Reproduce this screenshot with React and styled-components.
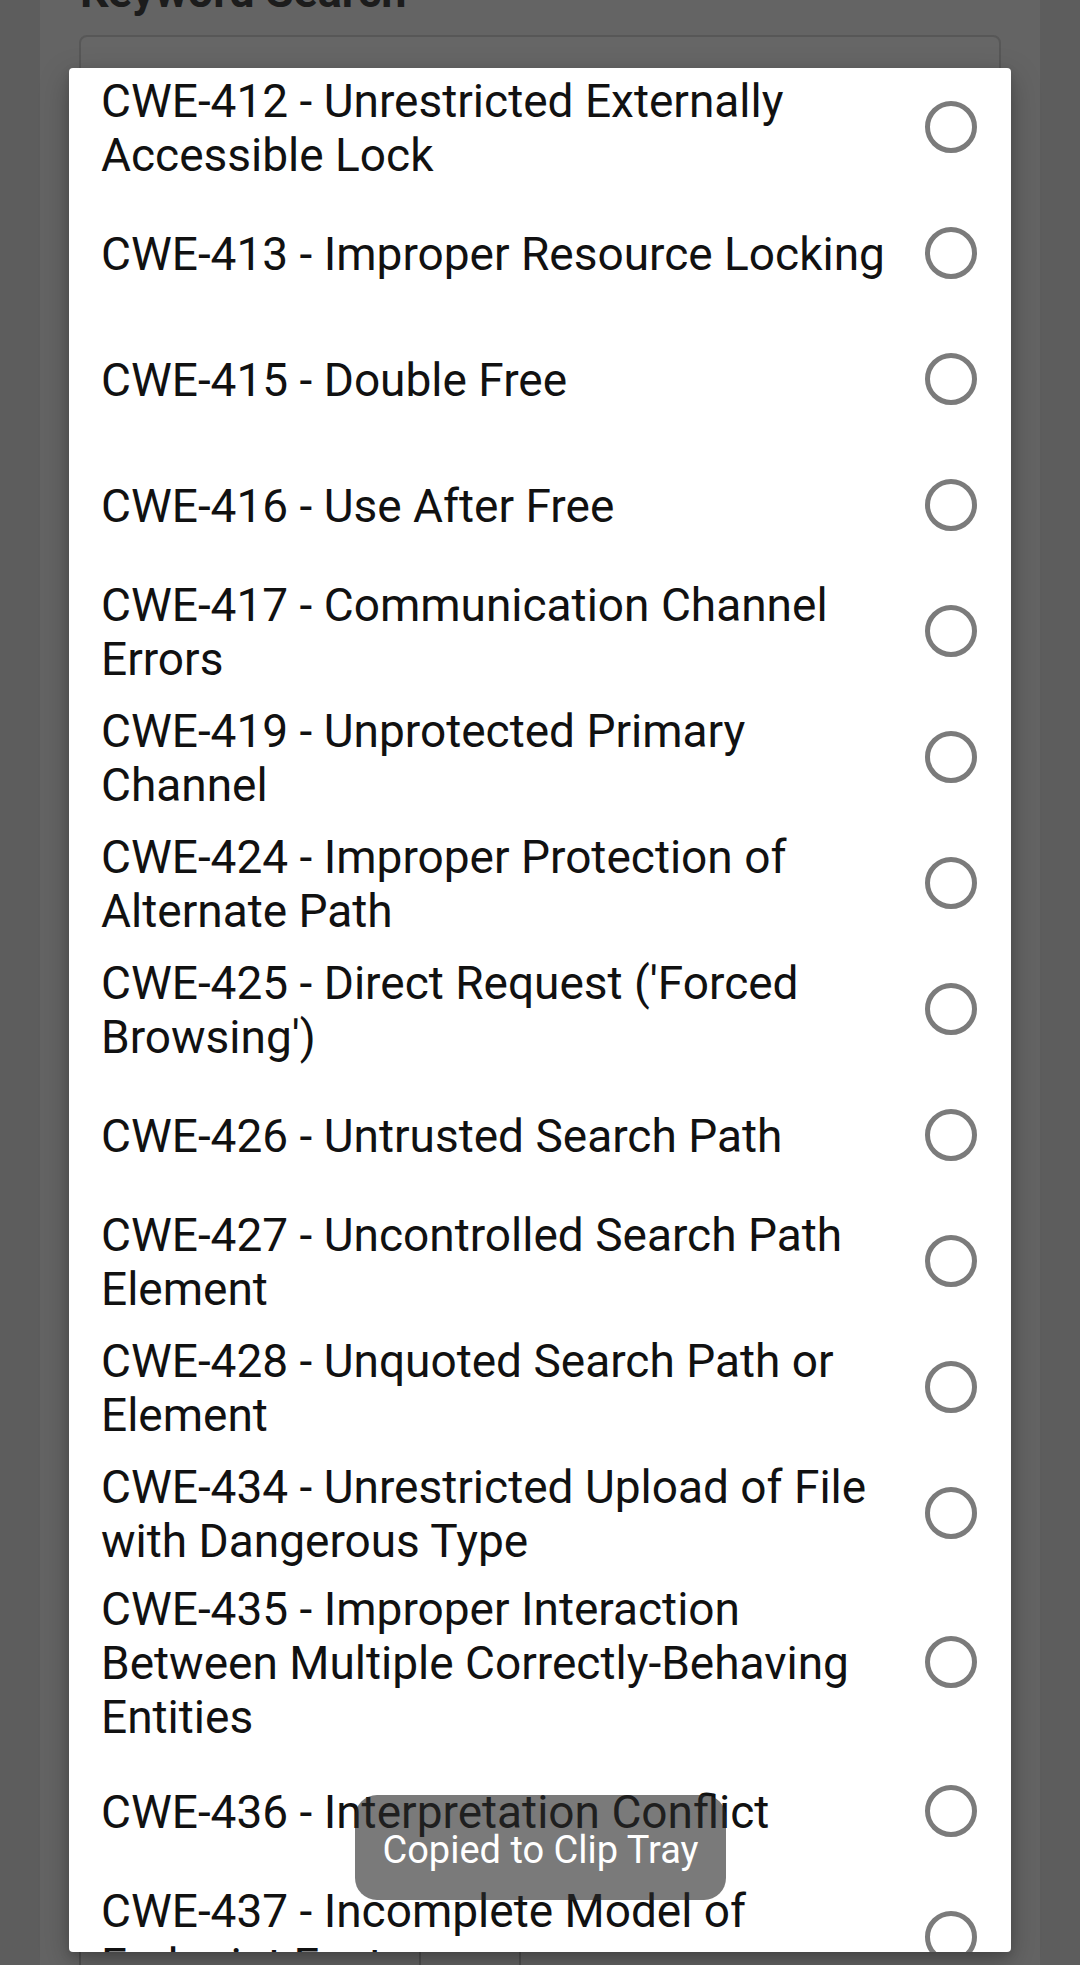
import React from "react";
import styled, { createGlobalStyle } from "styled-components";

const GlobalStyle = createGlobalStyle`
  html, body {
    margin: 0;
    padding: 0;
    background: #5d5d5d;
    overflow: hidden;
  }
  body {
    font-family: Roboto, "Noto Sans", "Liberation Sans", sans-serif;
  }
  * { box-sizing: border-box; }
`;

const Page = styled.div`
  position: relative;
  width: 1080px;
  height: 1965px;
  overflow: hidden;
  background: #5d5d5d;
  display: flex;
  justify-content: center;
`;

const BackCard = styled.div`
  width: 1000px;
  height: 100%;
  background: #646464;
  display: flex;
  flex-direction: column;
  padding: 0 39px;
`;

const Heading = styled.h2`
  margin: -34px 0 0 1px;
  font-size: 45px;
  line-height: 52px;
  font-weight: 700;
  color: #1c1c1c;
  white-space: nowrap;
`;

const SearchField = styled.div`
  margin-top: 17px;
  height: 120px;
  border: 2px solid #575757;
  border-radius: 8px;
  background: #666666;
`;

const Spacer = styled.div`
  flex: 1;
`;

const BottomBar = styled.div`
  height: 62px;
  display: flex;
  align-items: flex-start;
`;

const BarCell = styled.div`
  width: ${(p) => p.$w}px;
  height: 100%;
  border-left: ${(p) => (p.$left ? "2px solid #505050" : "none")};
  border-right: 2px solid #505050;
  display: flex;
  align-items: flex-start;
  justify-content: ${(p) => (p.$center ? "center" : "flex-start")};
  padding-left: ${(p) => (p.$center ? 0 : 28)}px;
  color: #2a2a2a;
  font-size: 30px;
  font-style: italic;
`;

const Dialog = styled.div`
  position: absolute;
  left: 69px;
  top: 68px;
  width: 942px;
  height: 1884px;
  background: #ffffff;
  border-radius: 4px;
  box-shadow: 0 10px 30px rgba(0, 0, 0, 0.25), 0 4px 10px rgba(0, 0, 0, 0.15);
  overflow: hidden;
`;

const List = styled.ul`
  list-style: none;
  margin: -4.5px 0 0 0;
  padding: 0;
`;

const Row = styled.li`
  min-height: 126px;
  display: flex;
  align-items: center;
  padding: 4px 34px 4px 32px;
`;

const RowText = styled.span`
  flex: 1;
  font-size: 46px;
  line-height: 54px;
  color: #111111;
  padding-top: 2px;
`;

const Radio = styled.span`
  flex-shrink: 0;
  width: 52px;
  height: 52px;
  margin-left: 20px;
  border: 5px solid #7b7b7b;
  border-radius: 50%;
`;

const Toast = styled.div`
  position: absolute;
  left: 355px;
  top: 1795px;
  width: 371px;
  height: 105px;
  border-radius: 22px;
  background: rgba(40, 40, 40, 0.62);
  color: #ffffff;
  font-size: 38px;
  display: flex;
  align-items: center;
  justify-content: center;
  padding-top: 4px;
`;

const items = [
  "CWE-412 - Unrestricted Externally Accessible Lock",
  "CWE-413 - Improper Resource Locking",
  "CWE-415 - Double Free",
  "CWE-416 - Use After Free",
  "CWE-417 - Communication Channel Errors",
  "CWE-419 - Unprotected Primary Channel",
  "CWE-424 - Improper Protection of Alternate Path",
  "CWE-425 - Direct Request ('Forced Browsing')",
  "CWE-426 - Untrusted Search Path",
  "CWE-427 - Uncontrolled Search Path Element",
  "CWE-428 - Unquoted Search Path or Element",
  "CWE-434 - Unrestricted Upload of File with Dangerous Type",
  "CWE-435 - Improper Interaction Between Multiple Correctly-Behaving Entities",
  "CWE-436 - Interpretation Conflict",
  "CWE-437 - Incomplete Model of Endpoint Features",
];

const PrinterIcon = () => (
  <svg width="46" height="40" viewBox="0 0 46 40">
    <rect x="10" y="0" width="26" height="12" fill="#1e1e1e" />
    <rect x="2" y="10" width="42" height="22" rx="3" fill="#1e1e1e" />
    <rect x="14" y="4" width="3" height="8" fill="#555" />
    <rect x="29" y="4" width="3" height="8" fill="#555" />
  </svg>
);

export default function App() {
  return (
    <>
      <GlobalStyle />
      <Page>
        <BackCard>
          <Heading>Keyword Search</Heading>
          <SearchField />
          <Spacer />
          <BottomBar>
            <BarCell $w={342} $left>/ /</BarCell>
            <BarCell $w={100} $center>
              <PrinterIcon />
            </BarCell>
          </BottomBar>
        </BackCard>
        <Dialog>
          <List>
            {items.map((t) => (
              <Row key={t}>
                <RowText>{t}</RowText>
                <Radio />
              </Row>
            ))}
          </List>
        </Dialog>
        <Toast>Copied to Clip Tray</Toast>
      </Page>
    </>
  );
}
